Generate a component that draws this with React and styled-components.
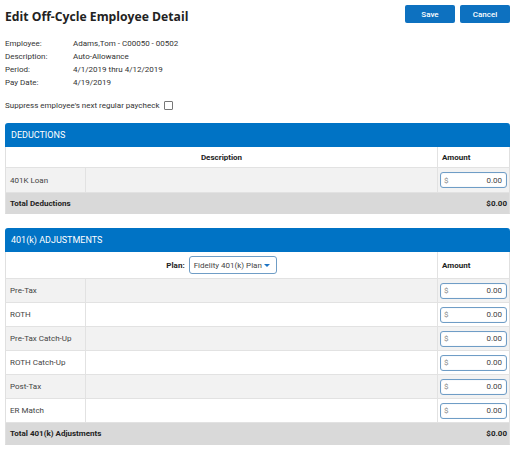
import React from "react";
import styled, { createGlobalStyle } from "styled-components";

const Global = createGlobalStyle`
  html, body { margin: 0; padding: 0; background: #fff; }
  body { font-family: Roboto, "Liberation Sans", Arial, sans-serif; color: #333; }
  * { box-sizing: border-box; }
`;

const Page = styled.div`
  width: 515px;
  padding: 5px 5px 0 5px;
`;

const TopBar = styled.div`
  display: flex;
  align-items: flex-start;
  justify-content: space-between;
  height: 32px;
`;

const Title = styled.h1`
  margin: 3px 0 0 0;
  font-family: "Open Sans", sans-serif;
  font-weight: 700;
  font-size: 12.2px;
  color: #222;
`;

const Buttons = styled.div`
  display: flex;
  gap: 5px;
`;

const Button = styled.button`
  width: 50px;
  height: 18px;
  border: none;
  border-radius: 2px;
  background: #0d71c0;
  color: #fff;
  font-family: Roboto, sans-serif;
  font-size: 8px;
  font-weight: 500;
  padding: 0;
`;

const Info = styled.div`
  display: grid;
  grid-template-columns: 68px 1fr;
  grid-auto-rows: 13px;
  font-size: 8px;
  align-items: center;
  color: #333;
`;

const Suppress = styled.div`
  display: flex;
  align-items: center;
  gap: 5px;
  font-size: 8px;
  margin-top: 10px;
  height: 12px;
`;

const Check = styled.span`
  width: 9px;
  height: 9px;
  border: 1px solid #777;
  border-radius: 1px;
  background: #fff;
`;

const Panel = styled.section`
  margin-top: ${(p) => p.$top}px;
  width: 505px;
`;

const PanelHeader = styled.div`
  height: 24px;
  background: #0073c5;
  border-radius: 3px 3px 0 0;
  color: #fff;
  font-size: 9px;
  display: flex;
  align-items: center;
  padding-left: 6px;
`;

const Row = styled.div`
  display: grid;
  grid-template-columns: ${(p) => (p.$span ? "432px 73px" : "80px 352px 73px")};
  height: ${(p) => p.$h}px;
  background: ${(p) => p.$bg};
  border-left: 1px solid #e0e0e0;
  border-right: 1px solid #e0e0e0;
  border-bottom: 1px solid ${(p) => (p.$total ? "transparent" : "#e2e2e2")};
  font-size: 8px;
  font-weight: ${(p) => (p.$bold ? 700 : 400)};
  color: ${(p) => (p.$bold ? "#222" : "#444")};
`;

const Cell = styled.div`
  display: flex;
  align-items: center;
  justify-content: ${(p) => p.$justify || "flex-start"};
  padding: ${(p) => p.$pad || "0 4px"};
  border-right: ${(p) => (p.$line ? "1px solid #e2e2e2" : "none")};
  gap: 4px;
`;

const Amount = styled.div`
  width: 67px;
  height: 16px;
  border: 1px solid #6f9dc6;
  border-radius: 3px;
  background: #fff;
  display: flex;
  align-items: center;
  justify-content: space-between;
  padding: 0 4px 0 3px;
  font-size: 8px;
  font-weight: 400;
  color: #444;
  box-shadow: inset 0 0 1px rgba(80, 130, 180, 0.35);
`;

const Dollar = styled.span`
  color: #888;
`;

const Select = styled.div`
  width: 88px;
  height: 18px;
  border: 1px solid #6f9dc6;
  border-radius: 3px;
  background: #fff;
  display: flex;
  align-items: center;
  justify-content: space-between;
  padding: 0 6px 0 4px;
  font-weight: 400;
  color: #444;
`;

const Caret = styled.span`
  width: 0;
  height: 0;
  border-left: 3.5px solid transparent;
  border-right: 3.5px solid transparent;
  border-top: 3.5px solid #1d74c4;
  margin-top: 1px;
`;

const AmountInput = () => (
  <Amount>
    <Dollar>$</Dollar>
    <span>0.00</span>
  </Amount>
);

const adjustments = ["Pre-Tax", "ROTH", "Pre-Tax Catch-Up", "ROTH Catch-Up", "Post-Tax", "ER Match"];

export default function App() {
  return (
    <Page>
      <Global />
      <TopBar>
        <Title>Edit Off-Cycle Employee Detail</Title>
        <Buttons>
          <Button>Save</Button>
          <Button>Cancel</Button>
        </Buttons>
      </TopBar>
      <Info>
        <span>Employee:</span>
        <span>Adams,Tom - C00050 - 00502</span>
        <span>Description:</span>
        <span>Auto-Allowance</span>
        <span>Period:</span>
        <span>4/1/2019 thru 4/12/2019</span>
        <span>Pay Date:</span>
        <span>4/19/2019</span>
      </Info>
      <Suppress>
        <span>Suppress employee's next regular paycheck</span>
        <Check />
      </Suppress>

      <Panel $top={12}>
        <PanelHeader>DEDUCTIONS</PanelHeader>
        <Row $span $h={21} $bg="#fff" $bold>
          <Cell $justify="center" $line>Description</Cell>
          <Cell>Amount</Cell>
        </Row>
        <Row $h={25} $bg="#f2f2f2">
          <Cell $line>401K Loan</Cell>
          <Cell $line />
          <Cell $pad="0 0 0 2px"><AmountInput /></Cell>
        </Row>
        <Row $span $h={21} $bg="#d9d9d9" $bold $total>
          <Cell>Total Deductions</Cell>
          <Cell $justify="flex-end">$0.00</Cell>
        </Row>
      </Panel>

      <Panel $top={14}>
        <PanelHeader>401(k) ADJUSTMENTS</PanelHeader>
        <Row $span $h={27} $bg="#fff" $bold>
          <Cell $justify="center" $line>
            <span>Plan:</span>
            <Select>
              <span>Fidelity 401(k) Plan</span>
              <Caret />
            </Select>
          </Cell>
          <Cell>Amount</Cell>
        </Row>
        {adjustments.map((a, i) => (
          <Row key={a} $h={24} $bg={i % 2 === 0 ? "#f2f2f2" : "#fff"}>
            <Cell $line>{a}</Cell>
            <Cell $line />
            <Cell $pad="0 0 0 2px"><AmountInput /></Cell>
          </Row>
        ))}
        <Row $span $h={22} $bg="#d9d9d9" $bold $total>
          <Cell>Total 401(k) Adjustments</Cell>
          <Cell $justify="flex-end">$0.00</Cell>
        </Row>
      </Panel>
    </Page>
  );
}
